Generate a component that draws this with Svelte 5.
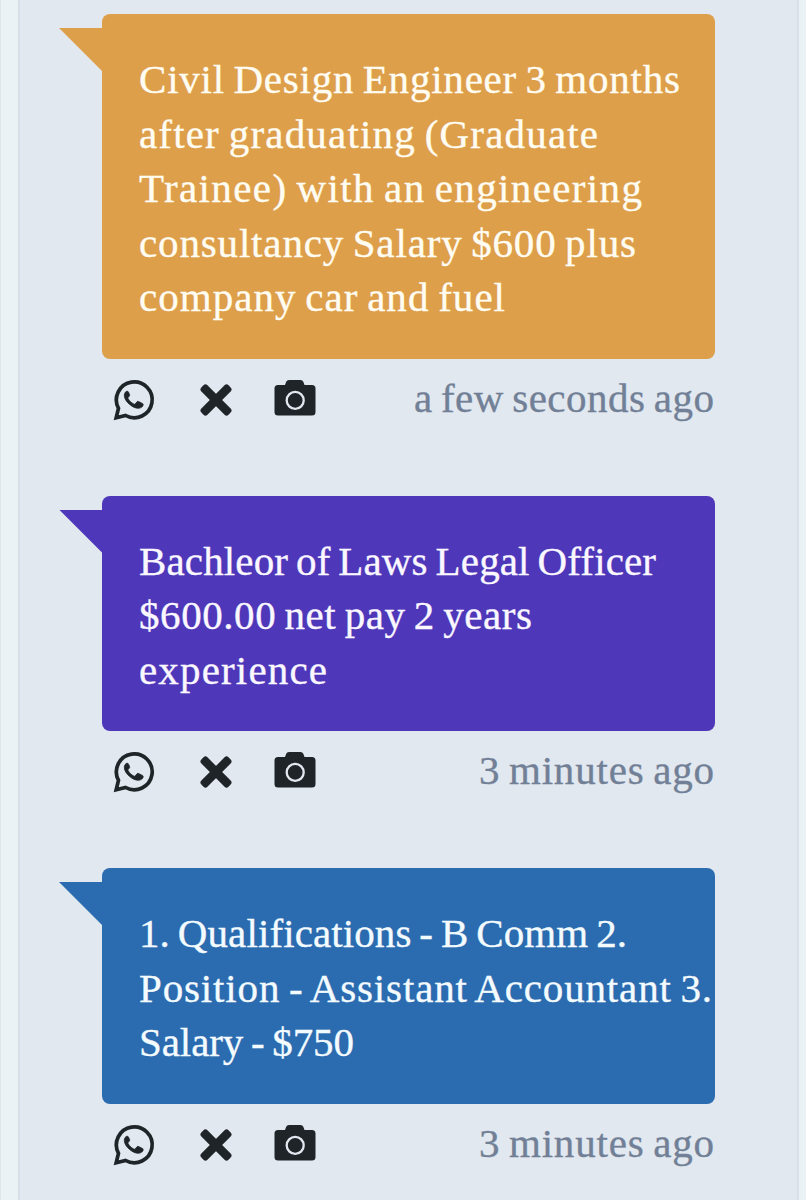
<script lang="ts">
	interface Line { text: string; width: number; }
	interface Message { color: string; tint: string; lines: Line[]; time: Line; }

	const messages: Message[] = [
		{
			color: '#de9f4b',
			tint: '#fffdf2',
			lines: [
				{ text: 'Civil Design Engineer 3 months', width: 541 },
				{ text: 'after graduating (Graduate', width: 459 },
				{ text: 'Trainee) with an engineering', width: 503 },
				{ text: 'consultancy Salary $600 plus', width: 497 },
				{ text: 'company car and fuel', width: 366 }
			],
			time: { text: 'a few seconds ago', width: 300 }
		},
		{
			color: '#4f37ba',
			tint: '#faf7ff',
			lines: [
				{ text: 'Bachleor of Laws Legal Officer', width: 517 },
				{ text: '$600.00 net pay 2 years', width: 393 },
				{ text: 'experience', width: 188 }
			],
			time: { text: '3 minutes ago', width: 235 }
		},
		{
			color: '#2b6cb0',
			tint: '#f4fbff',
			lines: [
				{ text: '1. Qualifications - B Comm 2.', width: 488 },
				{ text: 'Position - Assistant Accountant 3.', width: 573 },
				{ text: 'Salary - $750', width: 215 }
			],
			time: { text: '3 minutes ago', width: 235 }
		}
	];

	// track each line out to its measure
	function fit(node: HTMLElement, width: number) {
		const chars = node.textContent?.length ?? 1;
		const gap = (width - node.getBoundingClientRect().width) / (chars - 1);
		node.style.letterSpacing = `${gap}px`;
		node.style.marginRight = `${-gap}px`;
	}
</script>

<main class="page">
	<section class="feed">
		{#each messages as msg}
			<article class="message">
				<div class="bubble" style:background={msg.color} style:color={msg.tint}>
					<span class="tail" style:background={msg.color}></span>
					{#each msg.lines as line}
						<div class="line"><span class="run" use:fit={line.width}>{line.text}</span></div>
					{/each}
				</div>
				<div class="meta">
					<div class="actions">
						<svg class="whatsapp" viewBox="0 0 41 41" aria-label="WhatsApp">
							<path d="M3.2 37.800 5.500 28.300A17.900 17.900 0 1 1 12.600 35.500Z" fill="none" stroke="currentColor" stroke-width="3.700" />
							<path d="M14.300 11.300c-1.500-.2-3 1.600-3 4.200 0 6 8.700 13.100 14.200 12.800 2.600-.2 4.700-1.700 4.700-3.700 0-.6-.2-.9-.8-1.200l-3.900-1.900c-.6-.3-1.100-.2-1.500.3l-1.700 2c-.4.5-.9.500-1.500.2-2.500-1.200-4.400-3-5.700-5.400-.3-.5-.2-.9.200-1.300l1.100-1.400c.3-.4.4-.8.2-1.300l-1.200-2.600c-.2-.5-.4-.7-1.100-.7Z" fill="currentColor" stroke="currentColor" stroke-width=".8" />
						</svg>
						<svg class="cross" viewBox="0 0 32 32" aria-label="Close">
							<g fill="currentColor">
								<rect x="-4.300" y="-19.200" width="8.600" height="38.400" rx="2.800" transform="translate(16 16) rotate(45)" />
								<rect x="-4.300" y="-19.200" width="8.600" height="38.400" rx="2.800" transform="translate(16 16) rotate(-45)" />
							</g>
						</svg>
						<svg class="camera" viewBox="0 0 42 36" aria-label="Photo">
							<path d="M4 5h7l1.200-3.200Q12.900 0 15 0h11.500q2.100 0 2.800 1.800L30.500 5H38q3.500 0 3.500 3.500V32q0 3.500-3.500 3.500H4Q.5 35.500.5 32V8.500Q.5 5 4 5Z" fill="currentColor" />
							<circle cx="21.200" cy="20.400" r="8.500" fill="none" stroke="#e1e8ef" stroke-width="2.300" />
						</svg>
					</div>
					<div class="time"><span class="run" use:fit={msg.time.width}>{msg.time.text}</span></div>
				</div>
			</article>
		{/each}
	</section>
</main>

<style>
	:global(body) { background: #ebf2f6; }

	.page {
		height: 1200px;
		box-sizing: border-box;
		overflow: hidden;
		padding: 0 7px 0 17px;
		border-left: 1px solid #dfe5ed;
		background: #ebf2f6;
	}
	.feed {
		height: 100%;
		box-sizing: border-box;
		padding: 14px 82px 0 82px;
		border: solid #d9dfe9;
		border-width: 0 2px;
		background: #e1e8ef;
		font-family: "Liberation Serif", serif;
		font-size: 41px;
		word-spacing: -2.5px;
		-webkit-text-stroke: 0.35px currentColor;
	}

	.message { margin-bottom: 72.600px; }
	.bubble {
		position: relative;
		padding: 38px 0 34px 37px;
		border-radius: 8px;
	}
	.tail {
		position: absolute;
		top: 14px;
		left: -43px;
		width: 44px;
		height: 44px;
		clip-path: polygon(0 0, 100% 0, 100% 100%);
	}
	.line { height: 54.600px; line-height: 54.600px; white-space: nowrap; }
	.run { display: inline-block; white-space: nowrap; }

	.meta { display: flex; justify-content: space-between; height: 64px; }
	.actions { display: flex; align-items: flex-start; padding: 21px 0 0 11px; color: #1f2429; }
	.actions svg { display: block; flex: none; overflow: visible; }
	.whatsapp { width: 41px; height: 41px; }
	.cross { width: 32px; height: 32px; margin: 4px 0 0 46px; }
	.camera { width: 42px; height: 36px; margin: 0 0 0 42px; }
	.time { padding: 14px 1px 0 0; line-height: 50px; color: #718096; }
</style>
